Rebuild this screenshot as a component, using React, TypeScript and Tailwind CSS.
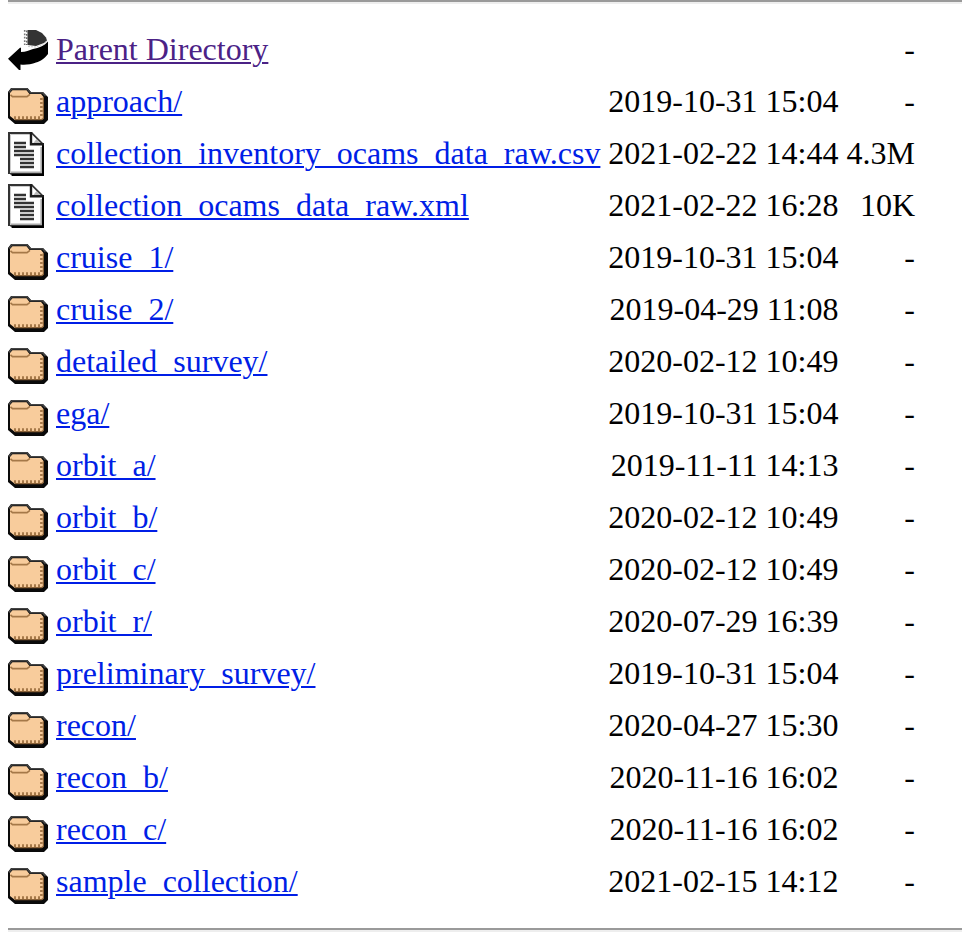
type Kind = 'back' | 'folder' | 'text';

interface Entry {
  kind: Kind;
  name: string;
  date: string;
  size: string;
}

const entries: Entry[] = [
  { kind: 'back', name: 'Parent Directory', date: '', size: '-' },
  { kind: 'folder', name: 'approach/', date: '2019-10-31 15:04', size: '-' },
  { kind: 'text', name: 'collection_inventory_ocams_data_raw.csv', date: '2021-02-22 14:44', size: '4.3M' },
  { kind: 'text', name: 'collection_ocams_data_raw.xml', date: '2021-02-22 16:28', size: '10K' },
  { kind: 'folder', name: 'cruise_1/', date: '2019-10-31 15:04', size: '-' },
  { kind: 'folder', name: 'cruise_2/', date: '2019-04-29 11:08', size: '-' },
  { kind: 'folder', name: 'detailed_survey/', date: '2020-02-12 10:49', size: '-' },
  { kind: 'folder', name: 'ega/', date: '2019-10-31 15:04', size: '-' },
  { kind: 'folder', name: 'orbit_a/', date: '2019-11-11 14:13', size: '-' },
  { kind: 'folder', name: 'orbit_b/', date: '2020-02-12 10:49', size: '-' },
  { kind: 'folder', name: 'orbit_c/', date: '2020-02-12 10:49', size: '-' },
  { kind: 'folder', name: 'orbit_r/', date: '2020-07-29 16:39', size: '-' },
  { kind: 'folder', name: 'preliminary_survey/', date: '2019-10-31 15:04', size: '-' },
  { kind: 'folder', name: 'recon/', date: '2020-04-27 15:30', size: '-' },
  { kind: 'folder', name: 'recon_b/', date: '2020-11-16 16:02', size: '-' },
  { kind: 'folder', name: 'recon_c/', date: '2020-11-16 16:02', size: '-' },
  { kind: 'folder', name: 'sample_collection/', date: '2021-02-15 14:12', size: '-' },
];

function FolderIcon() {
  return (
    <svg width="40" height="44" viewBox="0 0 40 44" className="block">
      <path d="M3 8H19.5L23 12H35L40 17V40L36 44H7L0 38V12Z" fill="#0a0a0a" />
      <path d="M0.8 12.5L4 8.8H19L22.5 12.8H34.5L37.5 16" fill="none" stroke="#444" strokeWidth="1.6" />
      <path d="M2 13L4.5 10.2H18.5L21.5 14H33L35.5 17V38L34 40H7L2 36Z" fill="#f8cc9c" />
      <path d="M2.5 14.8L4.5 16.6H19L22 14.4" fill="none" stroke="#a57848" strokeWidth="1.6" />
      <path d="M35.4 17V38.5L33.5 39.6H7" fill="none" stroke="#8a6238" strokeWidth="1.2" />
      <path d="M33.4 18V36" fill="none" stroke="#a57848" strokeWidth="2.6" strokeDasharray="2 2" />
      <path d="M6 37.6H33" fill="none" stroke="#a57848" strokeWidth="2.6" strokeDasharray="2 2" />
    </svg>
  );
}

function TextIcon() {
  return (
    <svg width="40" height="44" viewBox="0 0 40 44" className="block">
      <path d="M0 0H24L36 12V44H4L2 42H0Z" fill="#333" />
      <path d="M4 42H34V13H36V44H4Z" fill="#000" />
      <path d="M2 2H22V13H34V41H2Z" fill="#fff" />
      <path d="M2.5 41V2.5H22" fill="none" stroke="#ccc" strokeWidth="1" />
      <path d="M3 40.2H33.2V15" fill="none" stroke="#aaa" strokeWidth="1.6" />
      <path d="M24 2.5L33 11.5H24Z" fill="#fff" />
      <path d="M25 11.5L28.5 7L33 11.5Z" fill="#bbb" />
      <path d="M23 0V12.3H36" fill="none" stroke="#1c1c1c" strokeWidth="2.4" />
      <path d="M6 11H18M6 15H18M6 19H26M6 23H26M12 27H26M12 31H26M12 35H26" fill="none" stroke="#333" strokeWidth="2.3" />
    </svg>
  );
}

function BackIcon() {
  return (
    <svg width="40" height="44" viewBox="0 0 40 44" className="block">
      <path d="M19.5 2H28L34 5L38 9.5L39 12.5L36 15L28 18L19.5 17Z" fill="#333" />
      <path d="M16.7 2V17" fill="none" stroke="#777" strokeWidth="1.6" strokeDasharray="1.8 1.6" />
      <path d="M18.8 2.5V17" fill="none" stroke="#666" strokeWidth="1.6" strokeDasharray="1.8 1.6" />
      <path d="M0 30.7L12 19.7H13V24C18 24 21 22 25 21C31 20 36 18 40 13.5V26C36 31 33 33 28 34.5C23 36.5 17 37 12.5 36.5V42H11Z" fill="#000" />
      <path d="M20 18.5L28 19L35 16.3L39 13" fill="none" stroke="#ccc" strokeWidth="1" strokeDasharray="2 1" />
    </svg>
  );
}

const icons = { back: BackIcon, folder: FolderIcon, text: TextIcon };

function Rule() {
  return <div className="ml-2 h-1 border-y-2 border-t-[#9a9a9a] border-b-[#eeeeee]" />;
}

function Row({ kind, name, date, size }: Entry) {
  const Icon = icons[kind];
  return (
    <div className="grid h-[52px] grid-cols-[40px_544px_230.5px_68.5px] gap-x-2 whitespace-nowrap">
      <Icon />
      <div>
        <a
          href="#"
          className={`underline decoration-2 underline-offset-[2px] ${kind === 'back' ? 'text-[#4b2286]' : 'text-[#001ee6]'}`}
        >
          {name}
        </a>
      </div>
      <div className="text-right">{date}</div>
      <div className="text-right">{size}</div>
    </div>
  );
}

export default function App() {
  return (
    <main className="h-[932px] overflow-hidden bg-white font-['Liberation_Serif',serif] text-[32px] leading-[42px] text-black">
      <Rule />
      <div className="pt-6 pl-2">
        {entries.map((entry) => (
          <Row key={entry.name} {...entry} />
        ))}
      </div>
      <div className="pt-4">
        <Rule />
      </div>
    </main>
  );
}
